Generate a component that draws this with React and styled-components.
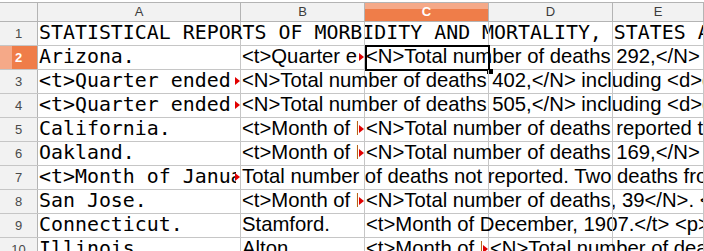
import React from 'react'
import styled, { createGlobalStyle } from 'styled-components'

const GlobalStyle = createGlobalStyle`
  html, body {
    margin: 0;
    padding: 0;
    background: #fff;
    overflow: hidden;
  }

  body {
    font-family: "Liberation Sans", Arial, sans-serif;
  }
`

const grid = '#c6c6c6'
const headLine = '#b4b4b4'
const orange = '#ef7d49'
const orangeLight = '#f5a988'

const colWidths = [203, 124, 124, 124]
const colNames = ['A', 'B', 'C', 'D', 'E']

const Sheet = styled.div`
  padding-top: 2px;
  width: 100%;
`

const HeaderRow = styled.div`
  display: flex;
  height: 20px;
  box-sizing: border-box;
  border-top: 1px solid ${headLine};
  border-bottom: 1px solid ${headLine};
  background: #f2f2f2;
`

const Corner = styled.div`
  flex: 0 0 38px;
  box-sizing: border-box;
  border-right: 1px solid ${headLine};
`

const ColHead = styled.div`
  flex: ${(p) => (p.$w ? `0 0 ${p.$w}px` : '1 1 auto')};
  box-sizing: border-box;
  border-right: 1px solid ${headLine};
  display: flex;
  align-items: center;
  justify-content: center;
  font-size: 13px;
  line-height: 18px;
  color: ${(p) => (p.$active ? '#fff' : '#3c3c3c')};
  font-weight: ${(p) => (p.$active ? 700 : 400)};
  background: ${(p) =>
    p.$active
      ? `linear-gradient(to bottom, ${orangeLight} 0 6px, ${orange} 6px)`
      : 'transparent'};
`

const Row = styled.div`
  display: flex;
  height: 24px;
  box-sizing: border-box;
  border-bottom: 1px solid ${grid};
`

const RowHead = styled.div`
  flex: 0 0 38px;
  box-sizing: border-box;
  border-right: 1px solid ${headLine};
  display: flex;
  align-items: center;
  justify-content: center;
  font-size: 13px;
  color: ${(p) => (p.$active ? '#fff' : '#4a4a4a')};
  font-weight: ${(p) => (p.$active ? 700 : 400)};
  background: ${(p) =>
    p.$active
      ? `linear-gradient(to right, ${orangeLight} 0 12px, ${orange} 12px)`
      : '#f2f2f2'};
`

const Cell = styled.div`
  position: relative;
  flex: ${(p) => (p.$w ? `0 0 ${p.$w}px` : '1 1 auto')};
  min-width: 0;
  box-sizing: border-box;
  border-right: 1px solid ${grid};
  padding-left: 1px;
  white-space: nowrap;
  font-family: ${(p) =>
    p.$mono
      ? '"DejaVu Sans Mono", "Liberation Mono", monospace'
      : '"Liberation Sans", Arial, sans-serif'};
  font-size: ${(p) => (p.$mono ? '19.9px' : '20.3px')};
  line-height: 21px;
  color: #000;
`

// text that runs into a filled neighbour is cut short of the red marker
const Clipped = styled.div`
  overflow: hidden;
  margin-right: ${(p) => (p.$mono ? 4 : 6)}px;
`

const Overflow = styled.span`
  position: absolute;
  right: 0;
  top: 7px;
  width: 0;
  height: 0;
  border-left: 5px solid #e10000;
  border-top: 4.5px solid transparent;
  border-bottom: 4.5px solid transparent;
`

const Cursor = styled.div`
  position: absolute;
  left: 0;
  top: -1px;
  width: 125px;
  height: 26px;
  box-sizing: border-box;
  border: 2px solid #000;
  pointer-events: none;
`

const Handle = styled.div`
  position: absolute;
  left: 122px;
  top: 23px;
  width: 6px;
  height: 5px;
  background: #000;
`

const m = (t) => ({ t, mono: true })
const s = (t) => ({ t })
const c = (t, mono) => ({ t, mono, clip: true })

const rows = [
  [m('STATISTICAL REPORTS OF MORBIDITY AND MORTALITY, STATES AND CITIES.')],
  [
    m('Arizona.'),
    c('<t>Quarter ended December 31, 1907.</t>'),
    s('<N>Total number of deaths 292,</N> including <d>deaths from tuberculosis</d>'),
  ],
  [
    c('<t>Quarter ended December 31, 1907.</t>', true),
    s('<N>Total number of deaths 402,</N> including <d>deaths from tuberculosis</d>'),
  ],
  [
    c('<t>Quarter ended March 31, 1908.</t>', true),
    s('<N>Total number of deaths 505,</N> including <d>deaths from tuberculosis</d>'),
  ],
  [
    m('California.'),
    c('<t>Month of December, 1907.</t>'),
    s('<N>Total number of deaths reported to the State board</N>'),
  ],
  [
    m('Oakland.'),
    c('<t>Month of December, 1907.</t>'),
    s('<N>Total number of deaths 169,</N> including'),
  ],
  [
    c('<t>Month of January, 1908.</t>', true),
    s('Total number of deaths not reported. Two deaths from smallpox'),
  ],
  [
    m('San Jose.'),
    c('<t>Month of December, 1907.</t>'),
    s('<N>Total number of deaths, 39</N>. <d>None from'),
  ],
  [m('Connecticut.'), s('Stamford.'), s('<t>Month of December, 1907.</t> <p>Population')],
  [
    m('Illinois.'),
    s('Alton.'),
    c('<t>Month of December, 1907.</t>'),
    s('<N>Total number of deaths 22,</N>'),
  ],
]

const App = () => (
  <>
    <GlobalStyle />
    <Sheet>
      <HeaderRow>
        <Corner />
        {colNames.map((name, i) => (
          <ColHead key={name} $w={colWidths[i]} $active={name === 'C'}>
            {name}
          </ColHead>
        ))}
      </HeaderRow>

      {rows.map((cells, r) => (
        <Row key={r}>
          <RowHead $active={r === 1}>{r + 1}</RowHead>
          {colNames.map((name, i) => {
            const cell = cells[i]
            return (
              <Cell key={name} $w={colWidths[i]} $mono={cell && cell.mono}>
                {cell &&
                  (cell.clip ? <Clipped $mono={cell.mono}>{cell.t}</Clipped> : cell.t)}
                {cell && cell.clip && <Overflow />}
                {r === 1 && name === 'C' && (
                  <>
                    <Cursor />
                    <Handle />
                  </>
                )}
              </Cell>
            )
          })}
        </Row>
      ))}
    </Sheet>
  </>
)

export default App
